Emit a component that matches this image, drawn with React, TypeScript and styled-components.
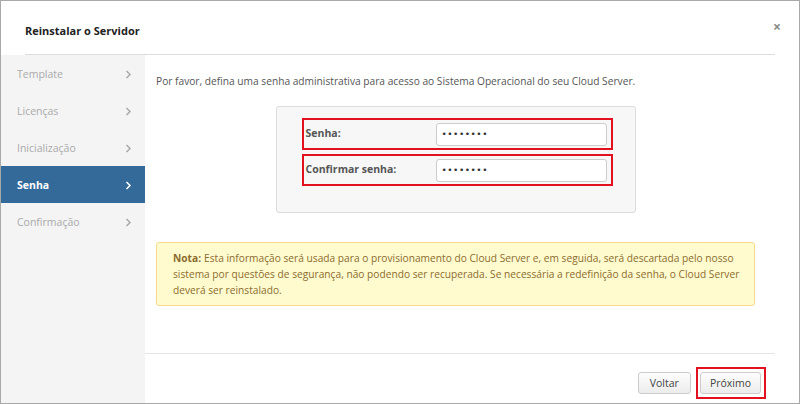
import React from "react";
import styled, { createGlobalStyle } from "styled-components";

const Global = createGlobalStyle`
  html, body { margin: 0; padding: 0; background: #fff; }
  body { font-family: "Open Sans", "DejaVu Sans", sans-serif; font-size: 10.2px; color: #555; }
  * { box-sizing: border-box; }
`;

const Frame = styled.div`
  width: 800px;
  height: 404px;
  border: 1px solid #a9a9a9;
  background: #fff;
  display: flex;
  flex-direction: column;
  overflow: hidden;
`;

const Header = styled.div`
  height: 54px;
  margin: 0 24px;
  border-bottom: 1px solid #dcdcdc;
  display: flex;
  align-items: center;
  justify-content: space-between;
  padding-top: 6px;
  flex-shrink: 0;
`;

const Title = styled.h1`
  margin: 0;
  font-size: 11px;
  font-weight: 700;
  color: #222;
`;

const Close = styled.span`
  color: #8a8a8a;
  font-size: 14px;
  font-weight: 700;
  margin-right: -6px;
  margin-top: -8px;
`;

const Body = styled.div`
  flex: 1;
  display: flex;
  min-height: 0;
`;

const Sidebar = styled.nav`
  width: 144px;
  background: #f4f4f4;
  display: flex;
  flex-direction: column;
`;

const Step = styled.div<{ $active?: boolean }>`
  height: 37px;
  padding: 0 13px 0 16px;
  display: flex;
  align-items: center;
  justify-content: space-between;
  font-size: 10.5px;
  color: ${(p) => (p.$active ? "#fff" : "#aaa")};
  background: ${(p) => (p.$active ? "#346a9a" : "transparent")};
  font-weight: ${(p) => (p.$active ? 700 : 400)};
  svg { margin-top: 2px; }
`;

const Main = styled.div`
  flex: 1;
  display: flex;
  flex-direction: column;
  padding-right: 24px;
`;

const Content = styled.div`
  flex: 1;
  padding: 19px 20px 0 11px;
  display: flex;
  flex-direction: column;
`;

const Intro = styled.p`
  margin: 0;
  color: #555;
  line-height: 14px;
`;

const FormBox = styled.div`
  align-self: center;
  width: 360px;
  margin-top: 18px;
  padding: 11px 0 26px 25px;
  background: #f7f7f7;
  border: 1px solid #dcdcdc;
  border-radius: 3px;
  display: flex;
  flex-direction: column;
  gap: 4px;
`;

const Row = styled.div`
  width: 311px;
  height: 32px;
  border: 2px solid #e3101f;
  display: flex;
  align-items: center;
  padding: 0 4px 0 2px;
`;

const Label = styled.label`
  width: 130px;
  font-size: 10.5px;
  font-weight: 700;
  color: #555;
  margin-top: -2px;
`;

const Input = styled.input`
  width: 171px;
  height: 23px;
  border: 1px solid #ccc;
  border-radius: 3px;
  background: #fff;
  font-size: 9px;
  padding: 0 5px;
  letter-spacing: 0.5px;
  color: #333;
  font-family: "DejaVu Sans", sans-serif;
`;

const Note = styled.div`
  margin-top: 29px;
  padding: 7px 8px 7px 16px;
  background: #fffbcf;
  border: 1px solid #f8d98e;
  border-radius: 3px;
  color: #8b6b2e;
  line-height: 16px;
`;

const NoteLabel = styled.strong`
  font-weight: 700;
  margin-right: 3px;
`;

const Footer = styled.div`
  height: 50px;
  border-top: 1px solid #e5e5e5;
  display: flex;
  align-items: flex-start;
  justify-content: flex-end;
  gap: 5px;
  padding: 13px 9px 0 0;
  flex-shrink: 0;
`;

const Button = styled.button`
  height: 22px;
  padding: 0 9px;
  border: 1px solid #ccc;
  border-radius: 3px;
  background: linear-gradient(#fdfdfd, #ececec);
  font-family: inherit;
  font-size: 10.5px;
  color: #444;
`;

const Voltar = styled(Button)`
  margin-top: 5px;
  padding: 0 11px;
`;

const Highlight = styled.div`
  border: 2px solid #e3101f;
  padding: 3px 3px 3px 2px;
  display: flex;
`;

const Chevron = () => (
  <svg width="7" height="9" viewBox="0 0 7 9">
    <path d="M1.5 1 L5 4.5 L1.5 8" fill="none" stroke="currentColor" strokeWidth="1.5" />
  </svg>
);

const steps = ["Template", "Licenças", "Inicialização", "Senha", "Confirmação"];

export default function App() {
  return (
    <>
      <Global />
      <Frame>
        <Header>
          <Title>Reinstalar o Servidor</Title>
          <Close>×</Close>
        </Header>
        <Body>
          <Sidebar>
            {steps.map((s) => (
              <Step key={s} $active={s === "Senha"}>
                <span>{s}</span>
                <Chevron />
              </Step>
            ))}
          </Sidebar>
          <Main>
            <Content>
              <Intro>
                Por favor, defina uma senha administrativa para acesso ao Sistema Operacional do seu Cloud Server.
              </Intro>
              <FormBox>
                <Row>
                  <Label>Senha:</Label>
                  <Input type="password" defaultValue="12345678" />
                </Row>
                <Row>
                  <Label>Confirmar senha:</Label>
                  <Input type="password" defaultValue="12345678" />
                </Row>
              </FormBox>
              <Note>
                <NoteLabel>Nota:</NoteLabel>Esta informação será usada para o provisionamento do Cloud Server e, em seguida, será descartada pelo nosso sistema por questões de segurança, não podendo ser recuperada. Se necessária a redefinição da senha, o Cloud Server deverá ser reinstalado.
              </Note>
            </Content>
            <Footer>
              <Voltar>Voltar</Voltar>
              <Highlight>
                <Button>Próximo</Button>
              </Highlight>
            </Footer>
          </Main>
        </Body>
      </Frame>
    </>
  );
}
